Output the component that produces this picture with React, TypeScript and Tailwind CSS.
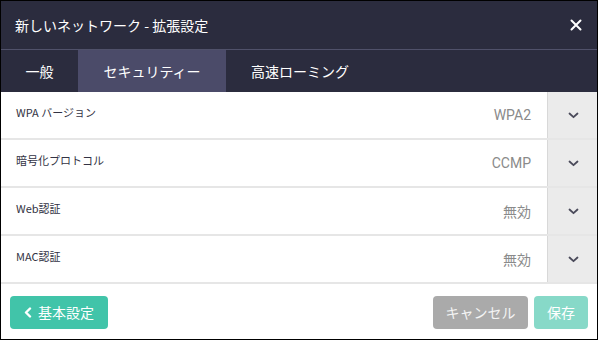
import React from "react";

const jp = { fontFamily: '"Noto Sans CJK JP", "Noto Sans", sans-serif' };
const ro = { fontFamily: 'Roboto, "Noto Sans CJK JP", sans-serif' };

function Chevron() {
  return (
    <svg width="11" height="7" viewBox="0 0 11 7" fill="none">
      <path d="M1.5 1.5 L5.5 5.2 L9.5 1.5" stroke="#4a4a5a" strokeWidth="1.8" strokeLinecap="round" strokeLinejoin="round" />
    </svg>
  );
}

const rows: { label: React.ReactNode; value: string; roboto?: boolean }[] = [
  { label: "WPA バージョン", value: "WPA2", roboto: true },
  { label: "暗号化プロトコル", value: "CCMP", roboto: true },
  { label: "Web認証", value: "無効" },
  { label: "MAC認証", value: "無効" },
];

export default function App() {
  return (
    <div className="w-[598px] h-[340px] border border-black bg-white flex flex-col overflow-hidden" style={jp}>
      <div className="h-[48px] bg-[#2b2c3e] flex items-center justify-between pl-[14px] pr-[15px] shrink-0">
        <span className="text-white text-[14px] leading-none">新しいネットワーク - 拡張設定</span>
        <svg width="12" height="12" viewBox="0 0 12 12">
          <path d="M1.5 1.5 L10.5 10.5 M10.5 1.5 L1.5 10.5" stroke="#ffffff" strokeWidth="2" strokeLinecap="round" />
        </svg>
      </div>
      <div className="h-[1px] bg-[#50516a] shrink-0" />
      <div className="h-[42px] bg-[#2b2c3e] flex shrink-0">
        <div className="w-[77px] flex items-center justify-center text-white text-[14px]">一般</div>
        <div className="w-[148px] flex items-center justify-center text-white text-[14px] bg-[#4b4b69]">セキュリティー</div>
        <div className="w-[148px] flex items-center justify-center text-white text-[14px]">高速ローミング</div>
      </div>
      <div className="flex flex-col shrink-0">
        {rows.map((r, i) => (
          <div key={i} className="h-[48px] flex border-b-2 border-[#e6e6e6]">
            <div className="flex-1 flex items-center justify-between pl-[15px] pr-[16px]">
              <span className="text-[11px] text-[#333344] -mt-[5px]">{r.label}</span>
              <span className="text-[14px] text-[#8a8a8a]" style={r.roboto ? ro : jp}>{r.value}</span>
            </div>
            <div className="w-[50px] bg-[#ebebeb] border-l border-[#d8d8d8] flex items-center justify-center pl-[1px]">
              <Chevron />
            </div>
          </div>
        ))}
      </div>
      <div className="flex-1 flex items-center justify-between pl-[9px] pr-[9px] pt-[2px]">
        <div className="h-[33px] w-[98px] rounded-[4px] bg-[#41c4a9] text-white text-[14px] flex items-center justify-center gap-[6px]">
          <svg width="8" height="11" viewBox="0 0 8 11">
            <path d="M6 1.5 L2 5.5 L6 9.5" stroke="#ffffff" strokeWidth="2.4" fill="none" strokeLinecap="round" strokeLinejoin="round" />
          </svg>
          <span>基本設定</span>
        </div>
        <div className="flex gap-[6px]">
          <div className="h-[33px] w-[95px] rounded-[4px] bg-[#aaaaaa] text-[#f4f4f4] text-[14px] flex items-center justify-center">キャンセル</div>
          <div className="h-[33px] w-[54px] rounded-[4px] bg-[#87d9c8] text-white text-[14px] flex items-center justify-center">保存</div>
        </div>
      </div>
    </div>
  );
}
